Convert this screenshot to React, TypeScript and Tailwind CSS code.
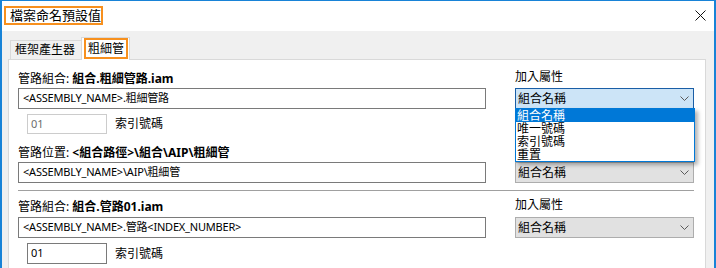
const font = { fontFamily: '"Noto Sans", "Noto Sans CJK TC", sans-serif' };

const Chevron = () => (
  <svg width="9" height="6" viewBox="0 0 9 6" className="shrink-0">
    <path d="M0.5 0.5 L4.5 4.5 L8.5 0.5" fill="none" stroke="#5a5a5a" strokeWidth="1" />
  </svg>
);

const TextBox = ({ children }: { children: React.ReactNode }) => (
  <div className="flex h-[21px] items-center border border-[#7a7a7a] bg-white pl-[4px] text-[11px] tracking-[-0.2px] text-black">
    {children}
  </div>
);

const IndexRow = ({ disabled, h }: { disabled?: boolean; h: string }) => (
  <div className="flex items-center">
    <div
      className={
        disabled
          ? "ml-[9px] flex h-[20px] w-[80px] items-center border border-[#cccccc] bg-white pl-[3px] text-[11px] text-[#6d6d6d]"
          : "ml-[9px] flex h-[21px] w-[80px] items-center border border-[#7a7a7a] bg-white pl-[3px] text-[11px] text-black"
      }
      style={{ height: h }}
    >
      01
    </div>
    <span className="ml-[8px] text-[12px] leading-[16px] text-black">索引號碼</span>
  </div>
);

const Dropdown = ({ focused }: { focused?: boolean }) => (
  <div
    className={
      focused
        ? "flex h-[21px] items-center justify-between border border-[#1a5ea6] bg-[#cce4f7] pl-[2px] pr-[4px] text-[12px]"
        : "flex h-[21px] items-center justify-between border border-[#adadad] bg-[#e1e1e1] pl-[2px] pr-[4px] text-[12px]"
    }
  >
    <span className="leading-[14px]">組合名稱</span>
    <Chevron />
  </div>
);

const Label = ({ plain, bold }: { plain: string; bold: string }) => (
  <div className="h-[16px] whitespace-nowrap text-[12px] leading-[16px] text-black">
    {plain} <span className="font-bold">{bold}</span>
  </div>
);

const items = ["組合名稱", "唯一號碼", "索引號碼", "重置"];

export default function App() {
  return (
    <div
      className="h-[268px] w-[716px] overflow-hidden border-t border-l-2 border-r-2 border-[#1883d7] bg-[#f0f0f0]"
      style={font}
    >
      <div className="flex h-[30px] items-start justify-between bg-white">
        <span className="ml-[2px] mt-[5px] h-[19px] w-[99px] border-2 border-[#f7901e] pl-[4px] text-[13px] leading-[15px] text-black">
          檔案命名預設值
        </span>
        <svg width="11" height="11" viewBox="0 0 11 11" className="mr-[8px] mt-[9px]">
          <path d="M0.5 0.5 L10.5 10.5 M10.5 0.5 L0.5 10.5" stroke="#111" strokeWidth="1" />
        </svg>
      </div>

      <div className="flex h-[28px] items-end pl-[8px]">
        <div className="flex h-[19px] w-[71px] items-center border-l border-t border-[#d9d9d9] bg-[#f0f0f0] pl-[4px] text-[12px] leading-[16px]">
          框架產生器
        </div>
        <div className="relative z-10 mb-[-1px] flex h-[23px] w-[49px] items-start border-x border-t border-[#d9d9d9] bg-white pl-[2px]">
          <span className="flex h-[21px] w-[44px] items-center justify-center border-2 border-[#f7901e] text-[12px] leading-[16px]">
            粗細管
          </span>
        </div>
      </div>

      <div className="ml-[6px] h-[300px] w-[698px] border border-[#d9d9d9] bg-white pl-[9px] pt-[11px]">
        <div className="grid grid-cols-[468px_179px] gap-x-[29px]">
          <Label plain="管路組合:" bold="組合.粗細管路.iam" />
          <div className="h-[16px] text-[12px] leading-[12px]">加入屬性</div>
        </div>

        <div className="mt-px grid grid-cols-[468px_179px] gap-x-[29px]">
          <TextBox>&lt;ASSEMBLY_NAME&gt;.粗細管路</TextBox>
          <div className="relative">
            <Dropdown focused />
            <div className="absolute left-0 top-[20px] z-20 w-[180px] border border-[#0078d7] bg-white shadow-[3px_3px_4px_rgba(0,0,0,0.3)]">
              {items.map((t, i) => (
                <div
                  key={t}
                  className={
                    i === 0
                      ? "h-[13px] bg-[#0078d7] pl-px text-[12px] leading-[13px] text-white"
                      : "h-[13px] pl-px text-[12px] leading-[13px] text-black"
                  }
                >
                  {t}
                </div>
              ))}
            </div>
          </div>
        </div>

        <div className="mt-[5px]">
          <IndexRow disabled h="20px" />
        </div>

        <div className="mt-[11px]">
          <Label plain="管路位置:" bold="<組合路徑>\組合\AIP\粗細管" />
        </div>

        <div className="mt-px grid grid-cols-[468px_179px] gap-x-[29px]">
          <TextBox>&lt;ASSEMBLY_NAME&gt;\AIP\粗細管</TextBox>
          <Dropdown />
        </div>

        <div className="mt-[7px] h-px w-[676px] bg-[#a0a0a0]" />

        <div className="mt-[8px] grid grid-cols-[468px_179px] gap-x-[29px]">
          <Label plain="管路組合:" bold="組合.管路01.iam" />
          <div className="h-[16px] text-[12px] leading-[12px]">加入屬性</div>
        </div>

        <div className="mt-[2px] grid grid-cols-[468px_179px] gap-x-[29px]">
          <TextBox>&lt;ASSEMBLY_NAME&gt;.管路&lt;INDEX_NUMBER&gt;</TextBox>
          <Dropdown />
        </div>

        <div className="mt-[5px]">
          <IndexRow h="21px" />
        </div>
      </div>
    </div>
  );
}
